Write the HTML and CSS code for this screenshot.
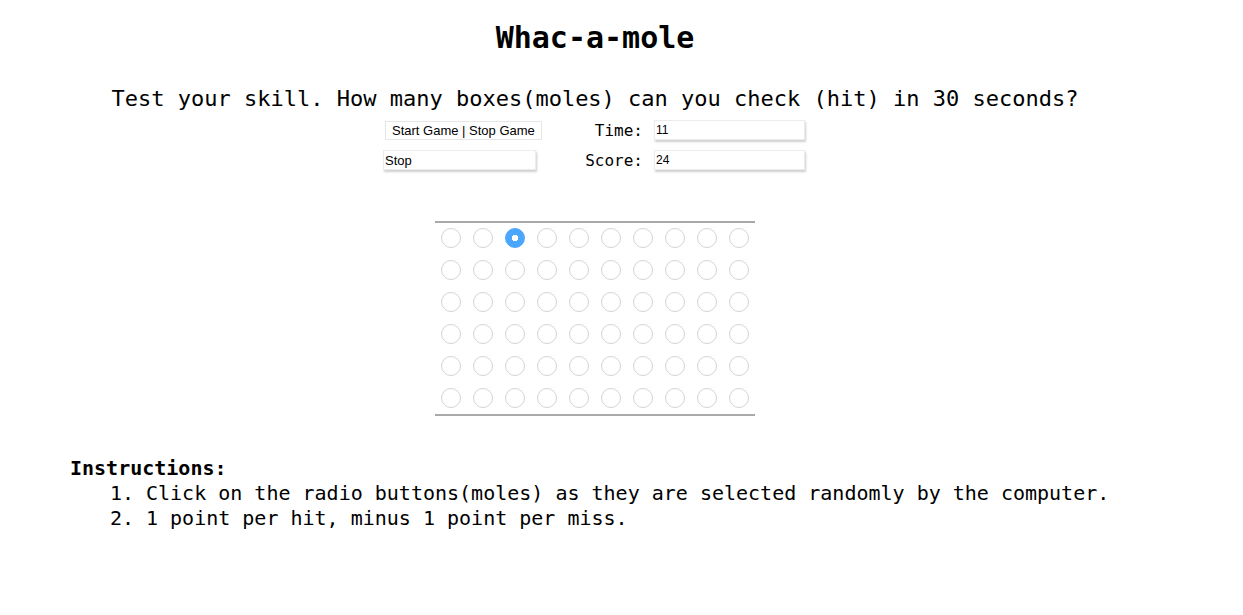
FILE: index.html
```html
<!DOCTYPE html>
<html>
<head>
<meta charset="utf-8">
<title>Whac-a-mole</title>
<link rel="stylesheet" href="styles.css">
</head>
<body>
<div class="page">
  <h1 class="title">Whac-a-mole</h1>
  <p class="subtitle">Test your skill. How many boxes(moles) can you check (hit) in 30 seconds?</p>
  <div class="controls">
    <div class="row">
      <div class="cell-a"><button class="btn">Start Game | Stop Game</button></div>
      <label class="lbl">Time:</label>
      <input class="field" type="text" value="11">
    </div>
    <div class="row">
      <div class="cell-a"><input class="field stop" type="text" value="Stop"></div>
      <label class="lbl">Score:</label>
      <input class="field" type="text" value="24">
    </div>
  </div>
  <div class="board" id="board"></div>
</div>
<div class="instructions">
  <div class="ins-title">Instructions:</div>
  <ol class="ins-list">
    <li>Click on the radio buttons(moles) as they are selected randomly by the computer.</li>
    <li>1 point per hit, minus 1 point per miss.</li>
  </ol>
</div>
<script>
  var b = document.getElementById('board');
  for (var i = 0; i < 60; i++) {
    var r = document.createElement('input');
    r.type = 'radio';
    r.name = 'mole';
    r.className = 'mole';
    if (i === 2) r.checked = true;
    b.appendChild(r);
  }
</script>
</body>
</html>
```
FILE: styles.css
```css
html, body {
  margin: 0;
  padding: 0;
  background: #fff;
}
body {
  font-family: "DejaVu Sans Mono", monospace;
  color: #000;
}
.page {
  width: 1190px;
  display: flex;
  flex-direction: column;
  align-items: center;
}
.title {
  font-size: 30px;
  font-weight: bold;
  margin: 20px 0 0 0;
  line-height: 36px;
}
.subtitle {
  font-size: 22px;
  margin: 30px 0 0 0;
  line-height: 26px;
}
.controls {
  margin-top: 8px;
  display: flex;
  flex-direction: column;
  gap: 10px;
  margin-left: -2px;
}
.row {
  display: flex;
  align-items: center;
  height: 20px;
}
.cell-a {
  width: 189px;
  display: flex;
}
.btn {
  font-family: "Liberation Sans", Arial, sans-serif;
  font-size: 13px;
  background: #fff;
  border: 1px solid #e6e6e6;
  padding: 0 6px;
  height: 19px;
  margin-left: 2px;
  color: #000;
}
.lbl {
  width: 82px;
  text-align: right;
  font-size: 16px;
  padding-right: 11px;
  box-sizing: border-box;
}
.field {
  font-family: "Liberation Sans", Arial, sans-serif;
  font-size: 12px;
  width: 151px;
  height: 20px;
  box-sizing: border-box;
  border: 1px solid #ececec;
  box-shadow: 1px 2px 2px #cfcfcf;
  padding: 1px 1px;
  margin: 0;
  color: #000;
  background: #fff;
}
.stop {
  width: 153px;
  font-size: 13px;
}
.board {
  margin-top: 51px;
  width: 320px;
  box-sizing: border-box;
  border-top: 2px solid #a9a9a9;
  border-bottom: 2px solid #a9a9a9;
  padding: 5px 6px 6px 6px;
  display: grid;
  grid-template-columns: repeat(10, 20px);
  grid-auto-rows: 20px;
  column-gap: 12px;
  row-gap: 12px;
}
.mole {
  appearance: none;
  -webkit-appearance: none;
  margin: 0;
  width: 20px;
  height: 20px;
  border-radius: 50%;
  border: 1px solid #d4d4d4;
  box-sizing: border-box;
  background: #fff;
}
.mole:checked {
  border-color: #4ba6fd;
  background: radial-gradient(circle, #fff 0 3px, #4ba6fd 3.5px);
}
.instructions {
  margin: 40px 0 0 70px;
  font-size: 20px;
  line-height: 25px;
}
.ins-title {
  font-weight: bold;
}
.ins-list {
  margin: 0;
  padding-left: 76px;
}
```
